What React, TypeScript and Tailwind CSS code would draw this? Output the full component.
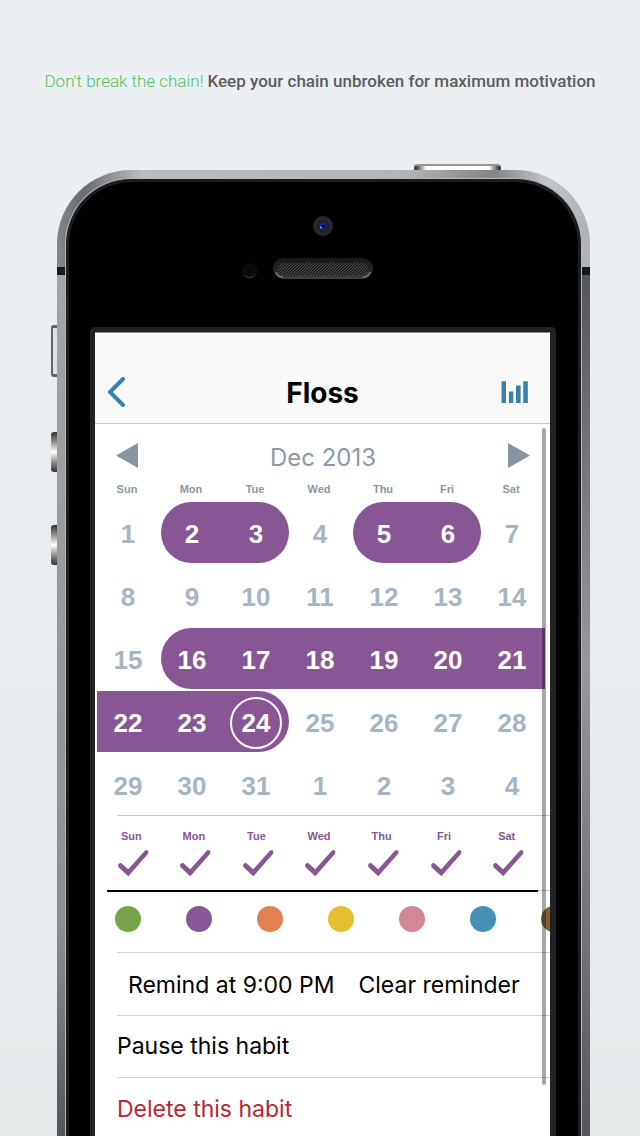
import React from "react";

type Day = { n: number; on?: boolean; start?: boolean; end?: boolean; today?: boolean };

const dayNames = ["Sun", "Mon", "Tue", "Wed", "Thu", "Fri", "Sat"];

const weeks: Day[][] = [
  [{ n: 1 }, { n: 2, on: true, start: true }, { n: 3, on: true, end: true }, { n: 4 }, { n: 5, on: true, start: true }, { n: 6, on: true, end: true }, { n: 7 }],
  [{ n: 8 }, { n: 9 }, { n: 10 }, { n: 11 }, { n: 12 }, { n: 13 }, { n: 14 }],
  [{ n: 15 }, { n: 16, on: true, start: true }, { n: 17, on: true }, { n: 18, on: true }, { n: 19, on: true }, { n: 20, on: true }, { n: 21, on: true }],
  [{ n: 22, on: true }, { n: 23, on: true }, { n: 24, on: true, end: true, today: true }, { n: 25 }, { n: 26 }, { n: 27 }, { n: 28 }],
  [{ n: 29 }, { n: 30 }, { n: 31 }, { n: 1 }, { n: 2 }, { n: 3 }, { n: 4 }],
];

const swatches = [
  { name: "Green", color: "bg-[#78a34a]" },
  { name: "Purple", color: "bg-[#885595]" },
  { name: "Orange", color: "bg-[#e3804f]" },
  { name: "Yellow", color: "bg-[#e6bf2e]" },
  { name: "Pink", color: "bg-[#d38794]" },
  { name: "Blue", color: "bg-[#4590b5]" },
  { name: "Brown", color: "bg-[#805f35]" },
];

function DayCell({ day }: { day: Day }) {
  const tone = day.on ? "bg-[#885595] text-white" : "text-[#a6b5c5]";
  const left = day.start ? "rounded-l-full" : "";
  const right = day.end ? "rounded-r-full" : "";
  return (
    <td className="p-0 pb-0.5 [tr:last-child>&]:pb-0">
      <button className={`flex h-[61px] w-full items-center justify-center pt-0.5 pr-0.5 text-[26px] leading-none font-bold ${tone} ${left} ${right}`}>
        {day.today ? (
          <span className="flex size-[52px] shrink-0 items-center justify-center rounded-full border-2 border-white">{day.n}</span>
        ) : (
          day.n
        )}
      </button>
    </td>
  );
}

function Calendar() {
  return (
    <section>
      <div className="flex h-14 items-center justify-between pt-1.5 pr-5 pl-[21px]">
        <button aria-label="Previous month">
          <svg className="h-[25px] w-[22px]" viewBox="0 0 22 25" fill="#8894a1"><path d="M22 0v25L0 12.5z" /></svg>
        </button>
        <h2 className="pt-1.5 font-[Inter,sans-serif] text-2xl text-[#8d99a6]">Dec 2013</h2>
        <button aria-label="Next month">
          <svg className="h-[25px] w-[22px]" viewBox="0 0 22 25" fill="#8894a1"><path d="M0 0v25l22-12.5z" /></svg>
        </button>
      </div>
      <div className="pr-[5px] pl-0.5">
        <table className="w-full table-fixed border-collapse text-center">
          <thead>
            <tr className="h-[22px] align-top text-[11px] leading-[18px] text-[#8a97a6]">
              {dayNames.map((d) => <th key={d} className="p-0 pr-1 font-bold">{d}</th>)}
            </tr>
          </thead>
          <tbody>
            {weeks.map((w, i) => (
              <tr key={i}>{w.map((d) => <DayCell key={d.n} day={d} />)}</tr>
            ))}
          </tbody>
        </table>
      </div>
    </section>
  );
}

function Weekdays() {
  return (
    <div className="relative h-[74px]">
      <div className="grid grid-cols-7 pt-3 pr-2.5 pl-[7px]">
        {dayNames.map((d) => (
          <button key={d} aria-label={`Repeat on ${d}`} className="flex flex-col items-center text-[#885595]">
            <span className="pr-1 text-[11px] leading-4 font-bold">{d}</span>
            <svg className="mt-1.5 h-[27px] w-[31px]" viewBox="0 0 31 27" fill="currentColor">
              <path d="M.3 13.900L2.800 12.700L10.200 19.300L27.300.3Q30 0 30.300.8V3.500L10.300 26.200L.3 17z" />
            </svg>
          </button>
        ))}
      </div>
      <div className="absolute right-3 -bottom-0.5 left-3 h-0.5 bg-black" />
    </div>
  );
}

function Screen() {
  return (
    <div className="relative flex flex-1 flex-col overflow-hidden border-t border-[#8c8c8c] bg-white">
      <header className="grid h-[91px] shrink-0 grid-cols-[1fr_auto_1fr] items-center border-b border-[#c8c8c8] bg-[#f9f9f9] px-3 pt-7">
        <button aria-label="Back" className="justify-self-start">
          <svg className="h-[30px] w-[19px]" viewBox="0 0 19 30" fill="none" stroke="#3b7fac" strokeWidth="4" strokeLinecap="round" strokeLinejoin="round">
            <path d="M16 2L3 15l13 13" />
          </svg>
        </button>
        <h1 className="pt-0.5 font-[Inter,sans-serif] text-[28px] leading-8 font-bold text-black">Floss</h1>
        <button aria-label="Statistics" className="mr-2.5 justify-self-end">
          <svg className="h-[22px] w-[27px]" viewBox="0 0 27 22" fill="#3b7fac">
            <path d="M.6.3h4.400V22H.6zM7.900 10.500h4.400V22H7.900zM15 4.500h4.600V22H15zM22.300.3h4.500V22h-4.500z" />
          </svg>
        </button>
      </header>
      <Calendar />
      <div className="ml-[22px] h-px bg-[#c8c8c8]" />
      <Weekdays />
      <div className="ml-[22px] h-px bg-[#c8c8c8]" />
      <div className="flex h-[61px] items-center gap-[45px] overflow-hidden pr-5 pb-1.5 pl-5">
        {swatches.map((s) => (
          <button key={s.name} aria-label={s.name} className={`size-[26px] shrink-0 rounded-full ${s.color}`} />
        ))}
      </div>
      <div className="ml-[22px] font-[Inter,sans-serif] text-[23px] text-black">
        <div className="flex h-[63px] items-center gap-6 border-t border-[#d2d2d2] pt-0.5 pl-[11px] whitespace-nowrap">
          <button>Remind at 9:00 PM</button>
          <button>Clear reminder</button>
        </div>
        <button className="flex h-[62px] w-full items-center border-t border-[#d2d2d2]">Pause this habit</button>
        <button className="flex h-[60px] w-full items-center border-t border-[#d2d2d2] pt-1 text-[#b82735]">Delete this habit</button>
      </div>
      <div className="absolute top-[95px] right-1 bottom-[52px] w-1 rounded-full bg-black/35" />
    </div>
  );
}

function Sides() {
  return (
    <>
      <div className="absolute -top-1.5 right-[89px] h-1.5 w-[87px] rounded-t-[3px] border-t-2 border-[#939496] bg-[linear-gradient(to_right,#444_3%,#fff_14%,#fff_86%,#444_97%)]" />
      <div className="absolute top-[155px] -left-1.5 h-[52px] w-1.5 rounded-l-[3px] border-y-3 border-l-2 border-[#626469] bg-[#dfe2e7]" />
      <div className="absolute top-[262px] -left-1.5 h-10 w-1.5 rounded-l-[3px] bg-linear-to-b from-[#333] via-white to-[#333]" />
      <div className="absolute top-[355px] -left-1.5 h-10 w-1.5 rounded-l-[3px] bg-linear-to-b from-[#333] via-white to-[#333]" />
      <div className="absolute top-[105px] bottom-0 left-0 w-2 bg-linear-to-b from-[#a4a4a7] via-[#8f9094] via-75% to-[#55575c]" />
      <div className="absolute top-[105px] right-0 bottom-0 w-2 bg-linear-to-b from-[#55565a] via-[#98999d] via-45% to-[#55575c]" />
      <div className="absolute top-[97px] right-0 left-0 h-2 bg-[#181b1e]" />
    </>
  );
}

export default function App() {
  return (
    <main className="flex min-h-screen flex-col overflow-hidden bg-linear-to-b from-[#ecf0f3] via-[#e7ecef] to-[#e4e9ea] font-['Liberation_Sans',Arial,sans-serif]">
      <p className="flex h-[170px] shrink-0 items-start justify-center gap-1 pt-[69px] font-[Roboto,sans-serif] text-[17px] leading-6 whitespace-nowrap">
        <span className="font-light text-[#4cc35f]">Don't break the chain!</span>
        <span className="font-medium text-[#5b5d60]">Keep your chain unbroken for maximum motivation</span>
      </p>
      <div className="relative mr-[50px] ml-[57px] flex flex-1 flex-col rounded-t-[74px] bg-[linear-gradient(to_right,#85868a,#6b6c70_5%,#bcbdc0_16%,#b3b5b8_65%,#838487_82%,#c4c6c9_92%,#b0b1b4)] px-2 pt-2">
        <Sides />
        <div className="relative flex flex-1 flex-col rounded-t-[66px] border-x border-t border-[#b4b6b9] bg-[#1a1f23] px-[3px] pt-[3px]">
          <div className="flex flex-1 flex-col rounded-t-[63px] bg-black pr-[22px] pl-[21px]">
            <div className="flex h-[145px] shrink-0 flex-col items-center gap-[22px] pt-[34px]">
              <svg className="size-5" viewBox="0 0 20 20">
                <circle cx="10" cy="10" r="10" fill="#29292b" />
                <circle cx="10" cy="10" r="6" fill="#202023" />
                <circle cx="10" cy="10" r="3.500" fill="#1521a8" />
                <circle cx="10.500" cy="10.500" r="1.800" fill="#050830" />
                <circle cx="8" cy="11.500" r="1" fill="#8ea6e8" />
              </svg>
              <div className="flex items-center gap-4">
                <span className="mt-1 size-[15px] rounded-full border-b border-[#444] bg-[#0a0a0b]" />
                <svg className="h-[21px] w-[100px]" viewBox="0 0 100 21">
                  <defs>
                    <pattern id="mesh" width="3" height="3" patternUnits="userSpaceOnUse">
                      <rect width="3" height="3" fill="#1c1c1c" />
                      <path d="M0 3L3 0" stroke="#525252" strokeWidth="1" />
                    </pattern>
                    <linearGradient id="rim" x1="0" y1="0" x2="0" y2="1">
                      <stop offset="0" stopColor="#17181a" />
                      <stop offset=".6" stopColor="#26272a" />
                      <stop offset="1" stopColor="#404143" />
                    </linearGradient>
                  </defs>
                  <rect width="100" height="21" rx="10.500" fill="url(#rim)" />
                  <path d="M3 14Q5 19 10 19M97 14Q95 19 90 19" stroke="#77777a" strokeWidth="1.500" fill="none" />
                  <rect x="5" y="5" width="90" height="12" rx="6" fill="url(#mesh)" />
                </svg>
                <span className="size-[15px]" />
              </div>
            </div>
            <div className="flex flex-1 flex-col rounded-t-[5px] border-t-5 border-r-6 border-l-5 border-[#222]">
              <Screen />
            </div>
          </div>
        </div>
      </div>
    </main>
  );
}
